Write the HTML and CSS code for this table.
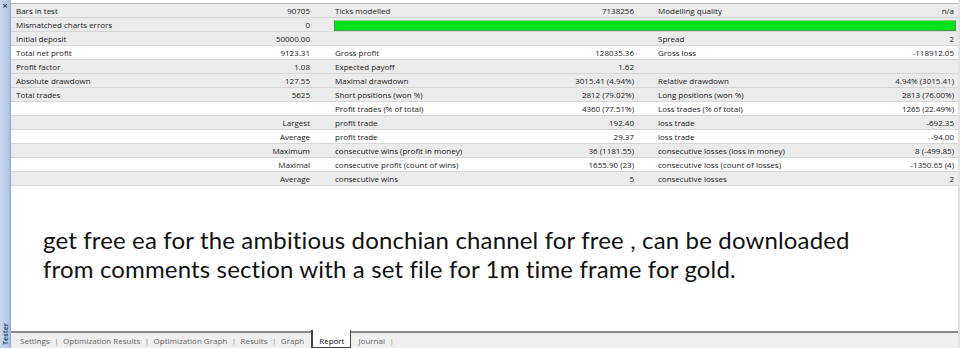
FILE: index.html
```html
<!DOCTYPE html>
<html>
<head>
<meta charset="utf-8">
<link rel="stylesheet" href="styles.css">
</head>
<body>
<div class="window">
  <aside class="side">
    <span class="close">&#215;</span>
    <span class="side-title">Tester</span>
  </aside>
  <main class="main">
    <section class="report">
      <div class="table">
        <div class="row gray">
          <div class="c l1">Bars in test</div><div class="c v1">90705</div>
          <div class="c l2">Ticks modelled</div><div class="c v2">7138256</div>
          <div class="c l3">Modelling quality</div><div class="c v3">n/a</div>
        </div>
        <div class="row gray">
          <div class="c l1">Mismatched charts errors</div><div class="c v1">0</div>
          <div class="c barcell"><div class="qbar"></div></div>
        </div>
        <div class="row gray">
          <div class="c l1">Initial deposit</div><div class="c v1">50000.00</div>
          <div class="c l2"></div><div class="c v2"></div>
          <div class="c l3">Spread</div><div class="c v3">2</div>
        </div>
        <div class="row">
          <div class="c l1">Total net profit</div><div class="c v1">9123.31</div>
          <div class="c l2">Gross profit</div><div class="c v2">128035.36</div>
          <div class="c l3">Gross loss</div><div class="c v3">-118912.05</div>
        </div>
        <div class="row gray">
          <div class="c l1">Profit factor</div><div class="c v1">1.08</div>
          <div class="c l2">Expected payoff</div><div class="c v2">1.62</div>
          <div class="c l3"></div><div class="c v3"></div>
        </div>
        <div class="row gray">
          <div class="c l1">Absolute drawdown</div><div class="c v1">127.55</div>
          <div class="c l2">Maximal drawdown</div><div class="c v2">3015.41 (4.94%)</div>
          <div class="c l3">Relative drawdown</div><div class="c v3">4.94% (3015.41)</div>
        </div>
        <div class="row gray">
          <div class="c l1">Total trades</div><div class="c v1">5625</div>
          <div class="c l2">Short positions (won %)</div><div class="c v2">2812 (79.02%)</div>
          <div class="c l3">Long positions (won %)</div><div class="c v3">2813 (76.00%)</div>
        </div>
        <div class="row">
          <div class="c l1"></div><div class="c v1"></div>
          <div class="c l2">Profit trades (% of total)</div><div class="c v2">4360 (77.51%)</div>
          <div class="c l3">Loss trades (% of total)</div><div class="c v3">1265 (22.49%)</div>
        </div>
        <div class="row gray">
          <div class="c l1"></div><div class="c v1">Largest</div>
          <div class="c l2">profit trade</div><div class="c v2">192.40</div>
          <div class="c l3">loss trade</div><div class="c v3">-692.35</div>
        </div>
        <div class="row">
          <div class="c l1"></div><div class="c v1">Average</div>
          <div class="c l2">profit trade</div><div class="c v2">29.37</div>
          <div class="c l3">loss trade</div><div class="c v3">-94.00</div>
        </div>
        <div class="row gray">
          <div class="c l1"></div><div class="c v1">Maximum</div>
          <div class="c l2">consecutive wins (profit in money)</div><div class="c v2">36 (1181.55)</div>
          <div class="c l3">consecutive losses (loss in money)</div><div class="c v3">8 (-499.85)</div>
        </div>
        <div class="row">
          <div class="c l1"></div><div class="c v1">Maximal</div>
          <div class="c l2">consecutive profit (count of wins)</div><div class="c v2">1655.90 (23)</div>
          <div class="c l3">consecutive loss (count of losses)</div><div class="c v3">-1350.65 (4)</div>
        </div>
        <div class="row gray">
          <div class="c l1"></div><div class="c v1">Average</div>
          <div class="c l2">consecutive wins</div><div class="c v2">5</div>
          <div class="c l3">consecutive losses</div><div class="c v3">2</div>
        </div>
      </div>
      <p class="message">get free ea for the ambitious donchian channel for free , can be downloaded<br>from comments section with a set file for 1m time frame for gold.</p>
    </section>
    <nav class="tabs">
      <span class="tab">Settings</span><span class="sep">|</span>
      <span class="tab">Optimization Results</span><span class="sep">|</span>
      <span class="tab">Optimization Graph</span><span class="sep">|</span>
      <span class="tab">Results</span><span class="sep">|</span>
      <span class="tab">Graph</span>
      <span class="tab active">Report</span>
      <span class="tab">Journal</span><span class="sep">|</span>
    </nav>
  </main>
</div>
</body>
</html>
```

FILE: styles.css
```css
* { box-sizing: border-box; }
html, body { margin: 0; padding: 0; background: #ffffff; }
body { width: 960px; height: 348px; overflow: hidden; font-family: "Open Sans", "Noto Sans", sans-serif; color: #1a1a1a; }

.window { display: flex; width: 960px; height: 348px; }

.side {
  width: 11px;
  flex: none;
  background: linear-gradient(to right, #c9d9ee, #a9c2e3);
  border-right: 1px solid #8eaad2;
  display: flex;
  flex-direction: column;
  justify-content: space-between;
  align-items: center;
}
.close { font-size: 9px; line-height: 9px; font-weight: bold; color: #333; margin-top: 1px; }
.side-title {
  writing-mode: vertical-rl;
  transform: rotate(180deg);
  font-size: 7px;
  font-weight: bold;
  color: #3a4f6e;
  margin-bottom: 3px;
}

.main { flex: 1; display: flex; flex-direction: column; border-right: 2px solid #e2e2e2; }

.report { flex: 1; display: flex; flex-direction: column; }

.table { margin-top: 3px; border-top: 1px solid #b8b8b8; }
.row {
  display: grid;
  grid-template-columns: 153px 157px 158px 166px 154px 158px;
  height: 14px;
  border-bottom: 1px solid #d6d6d6;
  background: #ffffff;
}
.row.gray { background: #ebebeb; }
.c { font-size: 8px; line-height: 13px; white-space: nowrap; overflow: hidden; }
.l1 { padding-left: 5px; }
.v1 { text-align: right; padding-right: 11px; }
.l2 { padding-left: 14px; }
.v2 { text-align: right; padding-right: 11px; }
.l3 { padding-left: 13px; }
.v3 { text-align: right; padding-right: 3px; }

.barcell { grid-column: 3 / 7; padding: 2px 1px 1px 13px; }
.qbar {
  height: 11px;
  background: #00e21c;
  border: 1px solid #4f9a55;
  border-top-color: #8ed08e;
}

.message {
  margin: 39px 0 0 32px;
  font-family: "Lato", "Open Sans", sans-serif;
  font-size: 24px;
  letter-spacing: 0.15px;
  line-height: 29px;
  color: #111;
}

.tabs {
  height: 17px;
  flex: none;
  border-top: 2px solid #8a8a8a;
  background: #efefef;
  display: flex;
  align-items: center;
  padding-left: 9px;
  font-size: 8px;
  color: #666;
}
.tab { padding: 0; }
.sep { padding: 0 4.5px; color: #888; }
.tab.active {
  align-self: stretch;
  margin: -3px 7px 0 7px;
  padding: 3px 6px 0 6px;
  background: #ffffff;
  color: #111;
  border: 1px solid #444;
  border-top: none;
  border-left-width: 2px;
  display: flex;
  align-items: center;
}
```
